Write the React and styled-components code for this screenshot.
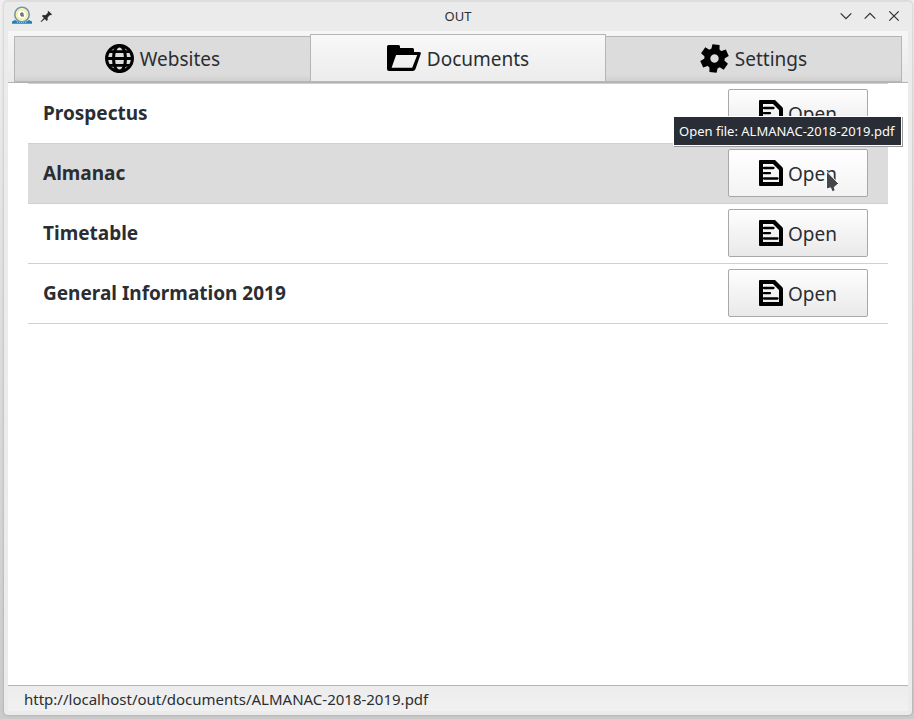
import React from "react";
import styled, { createGlobalStyle, css } from "styled-components";

const GlobalStyle = createGlobalStyle`
  * { box-sizing: border-box; }
  body { margin: 0; font-family: "Noto Sans", sans-serif; color: #2a2e32; overflow: hidden; }
  svg { display: block; flex: none; }
`;

const Desktop = styled.div`
  width: 914px;
  height: 719px;
  padding: 1px 2px 4px 4px;
  background: linear-gradient(#f0f0f0, #dcdcdc 50%, #cbcbcb);
  position: relative;
`;

const Window = styled.main`
  height: 714px;
  padding: 0 4px 4px;
  display: flex;
  flex-direction: column;
  border-radius: 4px;
  background: #ebebeb;
  box-shadow: 0 0 3px rgba(0, 0, 0, 0.24), inset 0 1px #dedede;
`;

const TitleBar = styled.header`
  height: 30px;
  flex: none;
  display: grid;
  grid-template-columns: 1fr auto 1fr;
  align-items: center;
  font-size: 13px;
`;

const TitleTools = styled.div`
  display: flex;
  align-items: center;
  gap: 8px;
  padding-left: 4px;
`;

const WindowControls = styled.div`
  display: flex;
  justify-content: flex-end;
  gap: 12px;
  padding-right: 8px;
`;

const TabBar = styled.nav`
  height: 52px;
  flex: none;
  padding: 0 6px;
  display: flex;
  align-items: flex-end;
  background: linear-gradient(#f6f6f6, #eaeaea);
  border-bottom: 1px solid #b2b2b2;
`;

const Label = styled.span`
  padding-top: 2px;
`;

const Tab = styled.button`
  width: ${(p) => p.$width}px;
  height: 46px;
  padding: 0 0 2px;
  display: flex;
  align-items: center;
  justify-content: center;
  gap: 6px;
  font: 19px "Noto Sans", sans-serif;
  color: #2a2e32;
  border: 1px solid #b5b5b5;
  border-bottom-color: #b8b8b8;
  background: linear-gradient(#dcdcdc 85%, #d0d0d0);
  ${(p) => p.$active && css`
    height: 48px;
    padding-bottom: 0;
    background: linear-gradient(#f8f8f8, #ececec);
  `}
  & + & { margin-left: -1px; }
`;

const Content = styled.section`
  flex: 1;
  padding: 0 20px;
  background: #fff;
`;

const Row = styled.article`
  height: 60px;
  padding: 0 20px 0 15px;
  display: flex;
  align-items: center;
  justify-content: space-between;
  border-bottom: 1px solid #d0d0d0;
  background: ${(p) => (p.$hovered ? "#dcdcdc" : "#fff")};
  &:first-child { height: 61px; border-top: 1px solid #d0d0d0; }
`;

const RowTitle = styled.h2`
  margin: 0;
  font-size: 19px;
  line-height: 27px;
  font-weight: 700;
`;

const OpenButton = styled.button`
  width: 140px;
  height: 48px;
  margin-bottom: 1px;
  padding: 0;
  display: flex;
  align-items: center;
  justify-content: center;
  gap: 5px;
  border: 1px solid #a8a8a8;
  border-radius: 2px;
  background: ${(p) => (p.$hovered ? "linear-gradient(#fff, #f3f3f3)" : "linear-gradient(#fefefe, #e9e9e9)")};
  font: 19px "Noto Sans", sans-serif;
  color: #2a2e32;
`;

const StatusBar = styled.footer`
  height: 26px;
  flex: none;
  padding-left: 16px;
  display: flex;
  align-items: center;
  border-top: 1px solid #b5b5b5;
  background: linear-gradient(#ececec, #f1f1f1);
  font-size: 15px;
`;

const Tooltip = styled.div`
  position: absolute;
  left: 674px;
  top: 117px;
  width: 227px;
  height: 28px;
  padding-left: 5px;
  display: flex;
  align-items: center;
  white-space: nowrap;
  background: #292d35;
  color: #fcfcfc;
  font-size: 13px;
  box-shadow: 0 0 0 1px #fff, 1px 1px 0 1px #999;
`;

const Pointer = styled.svg`
  position: absolute;
  left: 825px;
  top: 170px;
`;

const SealIcon = () => (
  <svg width="20" height="20" viewBox="0 0 20 20">
    <circle cx="10" cy="8.5" r="7.2" fill="#fffef0" stroke="#7795a4" strokeWidth="1.6" />
    <circle cx="10" cy="8.5" r="5" fill="#fff" stroke="#f3efa5" strokeWidth="2" />
    <path d="M9 7h2v3H9zM8 8h1M11 10h1" stroke="#59605f" strokeWidth="1" fill="#9ca3aa" />
    <path d="M0 15.5 3 14l2 1.3c3 1.4 7 1.4 10 0L17 14l3 1.5v2.2H0z" fill="#257fb7" />
    <path d="M5 16.5h10" stroke="#8cc1df" strokeDasharray="1 1" />
  </svg>
);

const PinIcon = () => (
  <svg width="13" height="13" viewBox="0 0 13 13">
    <path d="M8.4 1 12 4.3l-1 1-1-.3-2.4 2.5.1 2.4-1 1L4.9 9 1.3 12l-.7-.6 3.3-3.5-2-1.8 1-1 2.5.2L8 2.8l-.5-1z" fill="#292e33" />
  </svg>
);

const GlobeIcon = () => (
  <svg width="29" height="29" viewBox="0 0 29 29" fill="none" stroke="#000" strokeWidth="3.1">
    <circle cx="14.5" cy="14.5" r="12.9" />
    <ellipse cx="14.5" cy="14.5" rx="6" ry="12.9" />
    <path d="M3.5 7.7h22M1.5 14.5h26M3.5 21.3h22" strokeWidth="2.8" />
  </svg>
);

const FolderIcon = () => (
  <svg width="34" height="26" viewBox="0 0 34 26">
    <path fillRule="evenodd" d="M1.5 0h10q1.5 0 1.5 1.5V3h12.5q1.5 0 1.5 1.5V7h5.2q2.2 0 1.5 2l-5.2 15q-.7 2-2.8 2H2q-2 0-2-2V1.5Q0 0 1.5 0Zm7.6 10L4.6 22.7h20.6L30.2 10Z" />
  </svg>
);

const GearIcon = () => (
  <svg width="29" height="29" viewBox="-14.5 -14.5 29 29">
    <g transform="rotate(6)">
      {[0, 60, 120, 180, 240, 300].map((a) => (
        <path key={a} d="M-4.2-8-3.6-14h7.2l.6 6z" transform={`rotate(${a})`} />
      ))}
      <circle r="7.2" fill="none" stroke="#000" strokeWidth="6" />
    </g>
  </svg>
);

const FileIcon = () => (
  <svg width="24" height="26" viewBox="0 0 24 26">
    <path fillRule="evenodd" d="M1 0h15l7.3 7.2q.7.7.7 1.8v16q0 1-1 1H1q-1 0-1-1V1q0-1 1-1Zm3 4v18h16V10l-6-6Z" />
    <path d="M5 8h9.5M5 13.2h6M5 18.5h13.5" stroke="#000" strokeWidth="2.3" strokeLinecap="round" />
  </svg>
);

const ControlIcon = ({ path }) => (
  <svg width="12" height="12" viewBox="0 0 12 12" fill="none" stroke="#292e33" strokeWidth="1.2">
    <path d={path} />
  </svg>
);

const tabs = [
  { label: "Websites", Icon: GlobeIcon, width: 297 },
  { label: "Documents", Icon: FolderIcon, width: 296, active: true },
  { label: "Settings", Icon: GearIcon, width: 297 },
];

const documents = ["Prospectus", "Almanac", "Timetable", "General Information 2019"];

export default function App() {
  return (
    <Desktop>
      <GlobalStyle />
      <Window>
        <TitleBar>
          <TitleTools><SealIcon /><PinIcon /></TitleTools>
          <span>OUT</span>
          <WindowControls>
            <ControlIcon path="m.7 3.3 5.3 5.4 5.3-5.4" />
            <ControlIcon path="M.7 8.7 6 3.3l5.3 5.4" />
            <ControlIcon path="m1.3 1.3 9.4 9.4m0-9.4-9.4 9.4" />
          </WindowControls>
        </TitleBar>
        <TabBar>
          {tabs.map(({ label, Icon, width, active }) => (
            <Tab key={label} $width={width} $active={active}><Icon /><Label>{label}</Label></Tab>
          ))}
        </TabBar>
        <Content>
          {documents.map((title) => (
            <Row key={title} $hovered={title === "Almanac"}>
              <RowTitle>{title}</RowTitle>
              <OpenButton $hovered={title === "Almanac"}><FileIcon /><Label>Open</Label></OpenButton>
            </Row>
          ))}
        </Content>
        <StatusBar>http://localhost/out/documents/ALMANAC-2018-2019.pdf</StatusBar>
      </Window>
      <Tooltip>Open file: ALMANAC-2018-2019.pdf</Tooltip>
      <Pointer width="15" height="23" viewBox="0 0 15 23">
        <path d="M1.5 1v18.2L5.5 17.8 7.3 21.8 10.3 20.5 9.2 17.3 13.6 13.6z" fill="#444749" stroke="#fff" strokeWidth="1" />
      </Pointer>
    </Desktop>
  );
}
